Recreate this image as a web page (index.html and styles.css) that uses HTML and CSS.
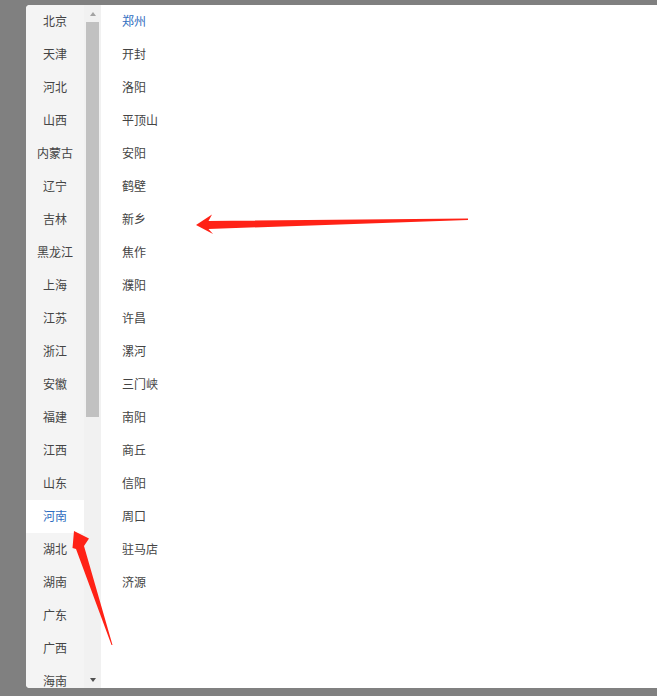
FILE: index.html
```html
<!DOCTYPE html>
<html lang="zh-CN">
<head>
<meta charset="utf-8">
<title>城市选择</title>
<link rel="stylesheet" href="styles.css">
</head>
<body>
<div class="panel">
  <div class="provinces">
    <div class="prov">北京</div>
    <div class="prov">天津</div>
    <div class="prov">河北</div>
    <div class="prov">山西</div>
    <div class="prov">内蒙古</div>
    <div class="prov">辽宁</div>
    <div class="prov">吉林</div>
    <div class="prov">黑龙江</div>
    <div class="prov">上海</div>
    <div class="prov">江苏</div>
    <div class="prov">浙江</div>
    <div class="prov">安徽</div>
    <div class="prov">福建</div>
    <div class="prov">江西</div>
    <div class="prov">山东</div>
    <div class="prov active">河南</div>
    <div class="prov">湖北</div>
    <div class="prov">湖南</div>
    <div class="prov">广东</div>
    <div class="prov">广西</div>
    <div class="prov">海南</div>
    <div class="prov">重庆</div>
    <div class="prov">四川</div>
    <div class="prov">贵州</div>
    <div class="prov">云南</div>
    <div class="prov">西藏</div>
    <div class="prov">陕西</div>
    <div class="prov">甘肃</div>
    <div class="prov">青海</div>
    <div class="prov">宁夏</div>
    <div class="prov">新疆</div>
    <div class="prov">台湾</div>
    <div class="prov">香港</div>
    <div class="prov">澳门</div>
  </div>
  <div class="scrollbar">
    <div class="sb-btn"><span class="tri-up"></span></div>
    <div class="sb-track"><div class="sb-thumb"></div></div>
    <div class="sb-btn"><span class="tri-down"></span></div>
  </div>
  <div class="cities">
    <div class="city active">郑州</div>
    <div class="city">开封</div>
    <div class="city">洛阳</div>
    <div class="city">平顶山</div>
    <div class="city">安阳</div>
    <div class="city">鹤壁</div>
    <div class="city">新乡</div>
    <div class="city">焦作</div>
    <div class="city">濮阳</div>
    <div class="city">许昌</div>
    <div class="city">漯河</div>
    <div class="city">三门峡</div>
    <div class="city">南阳</div>
    <div class="city">商丘</div>
    <div class="city">信阳</div>
    <div class="city">周口</div>
    <div class="city">驻马店</div>
    <div class="city">济源</div>
  </div>
</div>
<svg class="annot" width="657" height="696" viewBox="0 0 657 696">
  <polygon fill="#ff2216" points="196,225 212,214.5 208.5,221 468,218.5 468,220 208.5,229 213,234"/>
  <polygon fill="#ff2216" points="74,531 89,538.5 84,546 112.5,645 111.5,645 76,549 72.5,548"/>
</svg>
</body>
</html>
```

FILE: styles.css
```css
html, body {
  margin: 0;
  padding: 0;
}
body {
  background: #808080;
  width: 657px;
  height: 696px;
  overflow: hidden;
  padding: 5px 0 0 26px;
  box-sizing: border-box;
  font-family: "Noto Sans CJK SC", "Noto Sans", sans-serif;
  font-size: 12px;
  position: relative;
}
.panel {
  display: flex;
  height: 683px;
  background: #fff;
  border-radius: 4px 0 0 4px;
  overflow: hidden;
}
.provinces {
  width: 58px;
  flex: none;
  background: #f4f4f4;
  overflow: hidden;
}
.prov {
  height: 33px;
  line-height: 31px;
  text-align: center;
  color: #444;
}
.prov.active {
  background: #fff;
  color: #2f6dc0;
}
.scrollbar {
  width: 17px;
  flex: none;
  background: #f1f1f1;
  display: flex;
  flex-direction: column;
}
.sb-btn {
  height: 17px;
  flex: none;
  display: flex;
  align-items: center;
  justify-content: center;
}
.tri-up {
  width: 0;
  height: 0;
  border-left: 3.5px solid transparent;
  border-right: 3.5px solid transparent;
  border-bottom: 4px solid #a3a3a3;
}
.tri-down {
  width: 0;
  height: 0;
  border-left: 3.5px solid transparent;
  border-right: 3.5px solid transparent;
  border-top: 4px solid #505050;
}
.sb-track {
  flex: 1;
  padding: 0 2px;
}
.sb-thumb {
  height: 395px;
  background: #c1c1c1;
}
.cities {
  flex: 1;
  padding-left: 21px;
}
.city {
  height: 33px;
  line-height: 31px;
  color: #444;
}
.city.active {
  color: #2f6dc0;
}
.annot {
  position: absolute;
  left: 0;
  top: 0;
  pointer-events: none;
}
```
